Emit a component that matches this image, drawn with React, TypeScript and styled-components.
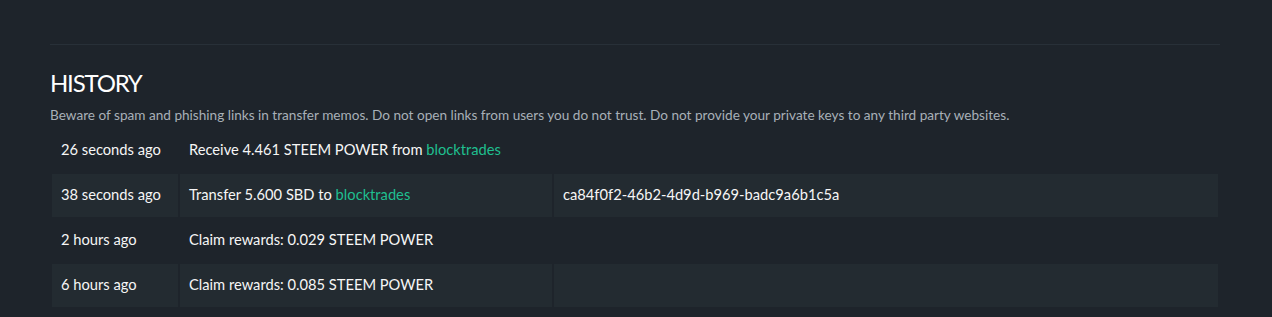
import React from "react";
import styled, { createGlobalStyle } from "styled-components";

const Global = createGlobalStyle`
  html, body { margin: 0; padding: 0; background: #1e242b; }
  body { font-family: Lato, "Liberation Sans", sans-serif; color: #f4f4f4; }
`;

const Page = styled.div`
  width: 1272px;
  height: 317px;
  background: #1e242b;
  overflow: hidden;
  box-sizing: border-box;
  padding: 44px 52px 0 50px;
`;

const Divider = styled.hr`
  margin: 0;
  border: 0;
  border-top: 1px solid #283038;
`;

const Title = styled.h2`
  margin: 24px 0 0 0;
  font-size: 24px;
  line-height: 28px;
  font-weight: 400;
  letter-spacing: -1.2px;
  color: #ffffff;
`;

const Warning = styled.p`
  margin: 10px 0 0 0;
  font-size: 13.6px;
  line-height: 16px;
  color: #a8b0b8;
`;

const Table = styled.table`
  margin-top: 4px;
  width: 100%;
  border-collapse: separate;
  border-spacing: 2px;
  font-size: 14.7px;
`;

const Row = styled.tr<{ $striped?: boolean }>`
  td {
    background: ${(p) => (p.$striped ? "#232b31" : "transparent")};
  }
`;

const Cell = styled.td<{ $w?: number }>`
  height: 43px;
  box-sizing: border-box;
  padding: 0 10px 3px 9px;
  vertical-align: middle;
  white-space: nowrap;
  color: #f6f6f6;
  ${(p) => (p.$w ? `width: ${p.$w}px;` : "")}
`;

const Link = styled.a`
  color: #1fbf8f;
  text-decoration: none;
`;

const rows = [
  { time: "26 seconds ago", op: <>Receive 4.461 STEEM POWER from <Link href="#">blocktrades</Link></>, memo: "" },
  { time: "38 seconds ago", op: <>Transfer 5.600 SBD to <Link href="#">blocktrades</Link></>, memo: "ca84f0f2-46b2-4d9d-b969-badc9a6b1c5a" },
  { time: "2 hours ago", op: <>Claim rewards: 0.029 STEEM POWER</>, memo: "" },
  { time: "6 hours ago", op: <>Claim rewards: 0.085 STEEM POWER</>, memo: "" },
];

export default function App() {
  return (
    <>
      <Global />
      <Page>
        <Divider />
        <Title>HISTORY</Title>
        <Warning>
          Beware of spam and phishing links in transfer memos. Do not open links from users you do not trust. Do not provide your private keys to any third party websites.
        </Warning>
        <Table>
          <tbody>
            {rows.map((r, i) => (
              <Row key={i} $striped={i % 2 === 1}>
                <Cell $w={126}>{r.time}</Cell>
                <Cell $w={372}>{r.op}</Cell>
                <Cell>{r.memo}</Cell>
              </Row>
            ))}
          </tbody>
        </Table>
      </Page>
    </>
  );
}
